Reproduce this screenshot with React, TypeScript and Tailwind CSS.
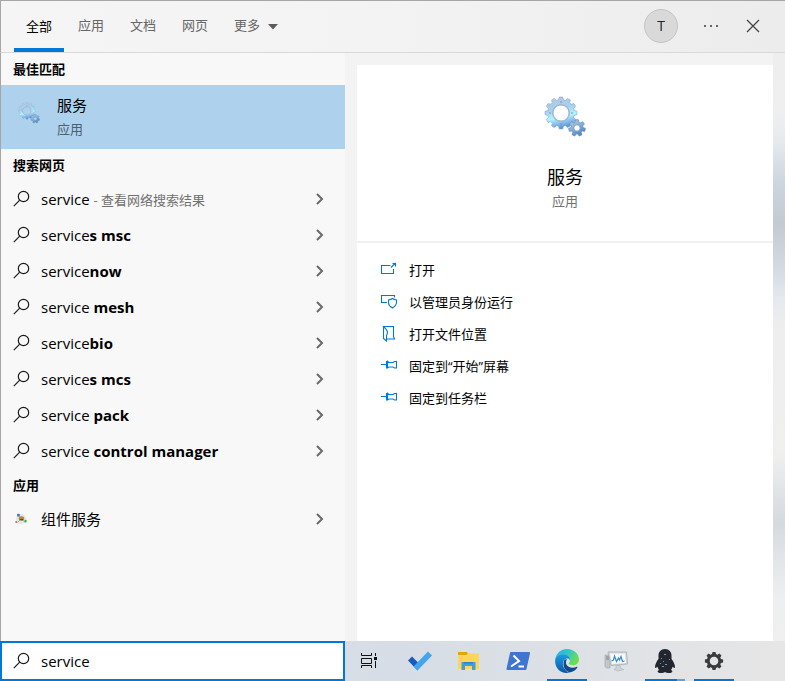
import type { ReactNode } from "react";

const FONT = "font-['Open_Sans','Noto_Sans_CJK_SC',sans-serif]";

function gearPath(cx: number, cy: number, outer: number, inner: number, hole: number, teeth: number) {
  const step = (Math.PI * 2) / teeth;
  const at = (r: number, a: number) =>
    `${(cx + r * Math.cos(a)).toFixed(2)} ${(cy + r * Math.sin(a)).toFixed(2)}`;
  let d = "";
  for (let i = 0; i < teeth; i++) {
    const a = i * step - Math.PI / 2;
    d += `${i ? "L" : "M"}${at(inner, a - step * 0.36)}L${at(outer, a - step * 0.2)}L${at(outer, a + step * 0.2)}L${at(inner, a + step * 0.36)}`;
  }
  return `${d}ZM${cx - hole} ${cy}a${hole} ${hole} 0 1 0 ${hole * 2} 0a${hole} ${hole} 0 1 0 ${-hole * 2} 0Z`;
}

function ServicesIcon({ id, className }: { id: string; className: string }) {
  return (
    <svg viewBox="0 0 42 42" className={className} aria-hidden="true">
      <defs>
        <linearGradient id={id} x1="0.35" y1="0" x2="0.6" y2="1">
          <stop offset="0" stopColor="#b9c8e2" />
          <stop offset="0.35" stopColor="#a3d0f2" />
          <stop offset="0.62" stopColor="#b4f4ff" />
          <stop offset="0.8" stopColor="#86bdf0" />
          <stop offset="1" stopColor="#5088cf" />
        </linearGradient>
        <linearGradient id={`${id}Small`} x1="0" y1="0" x2="0.6" y2="1">
          <stop offset="0" stopColor="#b8c9de" />
          <stop offset="0.5" stopColor="#86b4de" />
          <stop offset="1" stopColor="#4a86c6" />
        </linearGradient>
      </defs>
      <path d={gearPath(17, 17, 16, 13.4, 8, 12)} fill={`url(#${id})`} fillRule="evenodd" stroke="#8aa5c6" strokeWidth="0.6" />
      <circle cx="17" cy="17" r="8.4" fill="none" stroke="#a9b7c9" strokeWidth="1.2" />
      <g fill="#6a93bd">
        <circle cx="17" cy="6" r="0.8" />
        <circle cx="6" cy="17" r="0.8" />
        <circle cx="28" cy="17" r="0.8" />
        <circle cx="17" cy="28" r="0.8" />
      </g>
      <path d={gearPath(33, 32, 8.4, 6, 3.2, 7)} fill={`url(#${id}Small)`} fillRule="evenodd" stroke="#6688ad" strokeWidth="0.7" />
    </svg>
  );
}

function SearchIcon({ className = "" }: { className?: string }) {
  return (
    <svg viewBox="0 0 18 18" className={`h-[18px] w-[18px] shrink-0 ${className}`} fill="none" stroke="#1a1a1a" strokeWidth="1.2" aria-hidden="true">
      <circle cx="10.5" cy="6.500" r="5.2" />
      <path d="M6.700 10.2 0.800 16.2" />
    </svg>
  );
}

function ChevronIcon() {
  return (
    <svg viewBox="0 0 8 12" className="h-3 w-2 shrink-0" fill="none" stroke="#6a6a6a" strokeWidth="2" aria-hidden="true">
      <path d="M1 1l5 5-5 5" />
    </svg>
  );
}

function ComponentServicesIcon() {
  return (
    <svg viewBox="0 0 14 14" className="ml-[2px] h-3 w-3" aria-hidden="true">
      <circle cx="7" cy="7" r="6" fill="#e3e7ec" />
      <path d="M4 3l3 4-4 4M7 7l4 3" stroke="#9aa5af" fill="none" />
      <rect x="2.500" y="1" width="3" height="3" fill="#4c6ea8" />
      <ellipse cx="7.500" cy="6.500" rx="3.200" ry="2.600" fill="#b08b35" />
      <path d="M6 7.800h3.500" stroke="#3d3212" />
      <rect x="0.500" y="9.500" width="2" height="2" fill="#e0524a" />
      <rect x="11" y="8" width="2.500" height="3" fill="#34b54a" />
    </svg>
  );
}

function SectionTitle({ children }: { children: ReactNode }) {
  return <h2 className="flex h-8 items-center pl-3 text-[13px] leading-5 font-bold text-black">{children}</h2>;
}

function ResultRow({ icon, children }: { icon: ReactNode; children: ReactNode }) {
  return (
    <li>
      <button type="button" className="flex h-9 w-full items-center pr-[21px] pl-3 text-left text-[15px] leading-5 text-black">
        <span className="flex w-7 shrink-0 items-center">{icon}</span>
        <span className="min-w-0 flex-1 truncate">{children}</span>
        <ChevronIcon />
      </button>
    </li>
  );
}

const suggestions = [
  ["service", "s msc"],
  ["service", "now"],
  ["service ", "mesh"],
  ["service", "bio"],
  ["service", "s mcs"],
  ["service ", "pack"],
  ["service ", "control manager"],
];

const pin = <path d="M0 6.500h5.500M6.500 2.500v8M6.500 3.500l1.500 1h4l1.500-1h2v6.500h-2l-1.500-1h-4l-1.500 1H5.500v-6.500Z" />;

const actions: { label: string; icon: ReactNode }[] = [
  { label: "打开", icon: <path d="M9.500 3.500h-9v8h12V7M10 5.500l4.500-4.500M11.500 1.500h3V4.500" /> },
  {
    label: "以管理员身份运行",
    icon: <path d="M6 8.500H0.500v-7h13V3.500M11.500 4.500c1 .9 2.300 1.300 4 1.500v2.500c0 2.500-1.500 4-4 5.500-2.500-1.500-4-3-4-5.500V6c1.700-.2 3-.6 4-1.500Z" />,
  },
  { label: "打开文件位置", icon: <path d="M2.500 0.500v12l3 2.500V9.500c1-1.500 1-4.500-.5-6.500L2.500 0.500h10v10l1 2.500h-8" /> },
  { label: "固定到“开始”屏幕", icon: pin },
  { label: "固定到任务栏", icon: pin },
];

const taskbar: { label: string; active?: boolean; split?: boolean; icon: ReactNode }[] = [
  {
    label: "任务视图",
    icon: (
      <svg viewBox="0 0 24 24" className="h-6 w-6" fill="none" stroke="#111" strokeWidth="1" aria-hidden="true">
        <path d="M2.500 4v2.500h10V4M2.500 19v-2.500h10V19M2.500 9.500h10v5h-10zM16.500 4v3M16.500 12v7" />
        <path d="M15 8h3v3h-3z" fill="#111" stroke="none" />
      </svg>
    ),
  },
  {
    label: "待办",
    icon: (
      <svg viewBox="0 0 24 24" className="h-6 w-6" aria-hidden="true">
        <path d="M0 11.500 4 7.500l6.500 6.500-1 7.500Z" fill="#185abd" />
        <path d="M5.500 17.500 20 2.500l4 4L9.500 21.500Z" fill="#42a5ee" />
      </svg>
    ),
  },
  {
    label: "文件资源管理器",
    icon: (
      <svg viewBox="0 0 24 24" className="h-6 w-6" aria-hidden="true">
        <path d="M1 3h9l1 2h10.500v5H1Z" fill="#e5a50a" />
        <path d="M1 6h8.500l1.500-1.500h11V20H1Z" fill="#ffd45b" />
        <path d="M4.500 21v-8h14v8h-3.500v-4h-7v4Z" fill="#3f9de0" />
        <path d="M7 13h9v1.500H7z" fill="#2c83c8" />
      </svg>
    ),
  },
  {
    label: "PowerShell",
    icon: (
      <svg viewBox="0 0 24 24" className="h-6 w-6" aria-hidden="true">
        <path d="M5 3h18a1 1 0 0 1 1 1.200l-3.500 15.800a1 1 0 0 1-1 1H1.500a1 1 0 0 1-1-1.200L4 4a1 1 0 0 1 1-1Z" fill="#3f75d0" />
        <path d="M7.500 6.500 13 12l-8 5.500M12.500 17.500h5.500" fill="none" stroke="#fff" strokeWidth="2" />
      </svg>
    ),
  },
  {
    label: "Edge",
    active: true,
    icon: (
      <svg viewBox="0 0 24 24" className="h-6 w-6" aria-hidden="true">
        <defs>
          <linearGradient id="edgeTop" x1="0" y1="0" x2="1" y2="0.500">
            <stop offset="0" stopColor="#2aa7e8" />
            <stop offset="0.500" stopColor="#30c6c8" />
            <stop offset="1" stopColor="#6be04f" />
          </linearGradient>
          <linearGradient id="edgeBottom" x1="0" y1="0" x2="0" y2="1">
            <stop offset="0" stopColor="#1c9de0" />
            <stop offset="1" stopColor="#0d56a8" />
          </linearGradient>
        </defs>
        <path d="M.2 11C.8 4.500 6 0 12 0c7 0 12 5.200 12 10.500 0 3.500-2.800 5.800-6 5.800-3 0-4.300-1-4.300-1.700 0-.6 1.300-1.300 1.300-3.300C15 8.500 12.300 6.500 9 6.500c-4 0-7 2-8.800 4.500Z" fill="url(#edgeTop)" />
        <path d="M.1 12C.3 8 4 5.500 8.500 5.500c3.800 0 6.400 2.300 6.500 5.500-.8-1.300-2-1.800-3.300-1.500-3 .6-4.700 4-3.400 8 1 3 3.300 5.300 6.200 6C6.500 25.500 0 19.500.1 12Z" fill="url(#edgeBottom)" />
        <path d="M9.500 11c-2 3-1.500 10 5 12.500 3.500-.5 6.500-2.500 8-5.200.2-.5-.2-.8-.7-.5-4 2-9 1-10.500-2.500-.7-1.800-.3-3.500.7-5-.9-.2-1.800 0-2.500.7Z" fill="#114a8b" />
      </svg>
    ),
  },
  {
    label: "性能监视器",
    icon: (
      <svg viewBox="0 0 24 24" className="h-6 w-6" aria-hidden="true">
        <path d="M1 6h5v13H2.500L1 17.500Z" fill="#c3c6c8" stroke="#a0a4a7" strokeWidth="0.600" />
        <path d="M2 8h3M2 10h3" stroke="#7c8285" />
        <path d="M4 3h18.500l1 12L7 16.500Z" fill="#d6d9db" stroke="#a2a7aa" strokeWidth="0.700" />
        <path d="M6 4.500h15l1 9.500L8 15Z" fill="#f6fafd" />
        <path d="M7.500 12l2-1 1-4 2 5.500 2-3.500 1 2 1.500-3.500 1.500 5 2-.5" fill="none" stroke="#3d8bc9" strokeWidth="1.200" />
        <path d="M12 16.500h4l1 3 3 1-6 1.500-4-1.500 2-1Z" fill="#d0d3d5" stroke="#a8acaf" strokeWidth="0.500" />
      </svg>
    ),
  },
  {
    label: "QQ",
    active: true,
    split: true,
    icon: (
      <svg viewBox="0 0 24 24" className="h-6 w-6" aria-hidden="true">
        <path d="M12 0c4.200 0 6.500 3 6.500 6.500V10c1.800 2.200 3.500 5.500 3.500 8 0 1.200-1.200 1.400-2.300-.5-.5 1.500-1 2.500-1.700 3.500 2.500 1 1.500 3-2 3-1.500 0-3-.4-4-1-1 .6-2.500 1-4 1-3.500 0-4.500-2-2-3-.7-1-1.200-2-1.700-3.500C3.200 19.400 2 19.200 2 18c0-2.500 1.700-5.800 3.500-8V6.500C5.500 3 7.800 0 12 0Z" fill="#23252f" />
        <g fill="#6a9db5">
          <path d="M11 5h2v1h-2zM8 9h1v1H8zM16 10h1v1h-1zM10 12h1v1h-1zM7 14h1v1H7zM12 15h2v1h-2zM9 17h2v1H9z" />
        </g>
      </svg>
    ),
  },
  {
    label: "设置",
    active: true,
    icon: (
      <svg viewBox="0 0 24 24" className="h-6 w-6" aria-hidden="true">
        <path d={gearPath(12, 12, 9.200, 7.200, 4.300, 8)} fill="#3b3b3d" fillRule="evenodd" />
      </svg>
    ),
  },
];

export default function App() {
  return (
    <div className={`flex min-h-screen flex-col bg-[#f1f1f1] text-[13px] leading-5 text-black ${FONT}`}>
      <header className="flex h-[53px] items-stretch border-t border-b border-l border-t-[#a6a6a6] border-b-[#d9d9d9] border-l-[#a6a6a6] bg-linear-to-r from-[#f5f5f5] via-[#f3f3f3] to-[#ececec] pr-3 pl-[13px]">
        <nav className="flex gap-[2px]">
          <button type="button" className="w-[50px] border-b-4 border-[#0078d7] pt-[2px] text-black">全部</button>
          {["应用", "文档", "网页"].map((t) => (
            <button key={t} type="button" className="w-[50px] pb-1 text-[#666]">{t}</button>
          ))}
          <button type="button" className="flex items-center gap-2 pb-1 pl-3 text-[#666]">
            更多
            <svg viewBox="0 0 10 6" className="mt-1 h-[6px] w-[10px]" aria-hidden="true">
              <path d="M0 0h10L5 5.500Z" fill="#5c5c5c" />
            </svg>
          </button>
        </nav>
        <div className="ml-auto flex items-center pb-[2px]">
          <button type="button" className="h-[34px] w-[34px] rounded-full border border-[#c4c4c4] bg-[#d9d9d9] text-[14px] text-[#222]">T</button>
          <button type="button" aria-label="选项" className="ml-[25px]">
            <svg viewBox="0 0 16 4" className="h-1 w-4" fill="#666" aria-hidden="true">
              <path d="M1 1h2v2H1zM7 1h2v2H7zM13 1h2v2h-2z" />
            </svg>
          </button>
          <button type="button" aria-label="关闭" className="mr-[13px] ml-[27px]">
            <svg viewBox="0 0 14 14" className="h-[14px] w-[14px]" fill="none" stroke="#444" strokeWidth="1.300" aria-hidden="true">
              <path d="M1 1l12 12M13 1 1 13" />
            </svg>
          </button>
        </div>
      </header>

      <main className="flex flex-1">
        <section className="w-[345px] shrink-0 border-l border-[#a6a6a6] bg-[#f8f8f8]">
          <SectionTitle>最佳匹配</SectionTitle>
          <button type="button" className="flex h-16 w-full items-center bg-[#aed2ee] pl-[17px] text-left">
            <ServicesIcon id="gearSmall" className="mr-[17px] mb-2 h-[22px] w-[22px]" />
            <span className="flex flex-col gap-1">
              <span className="text-[15px] leading-5">服务</span>
              <span className="leading-5 text-[#4f606d]">应用</span>
            </span>
          </button>
          <SectionTitle>搜索网页</SectionTitle>
          <ul>
            <ResultRow icon={<SearchIcon />}>
              service <span className="text-[13px] text-[#707070]">- 查看网络搜索结果</span>
            </ResultRow>
            {suggestions.map(([typed, rest]) => (
              <ResultRow key={typed + rest} icon={<SearchIcon />}>
                {typed}
                <b className="font-bold">{rest}</b>
              </ResultRow>
            ))}
          </ul>
          <SectionTitle>应用</SectionTitle>
          <ul>
            <ResultRow icon={<ComponentServicesIcon />}>组件服务</ResultRow>
          </ul>
        </section>

        <div className="flex flex-1 bg-[linear-gradient(to_bottom,#eeeeee_0%,#efefef_10%,#e6eaef_15%,#cdd5de_22%,#c3cad2_29%,#d2d9e1_36%,#e6e9ef_42%,#eeeeee_47%,#f0f0ef_68%,#dde1e5_76%,#d5dade_80%,#e2e5e9_86%,#eeeff0_93%,#f0f0f0_100%)]">
          <div className="flex flex-1 bg-[#f3f3f3] pt-3 pl-3">
            <section className="flex-1 bg-white">
              <div className="flex h-[178px] flex-col items-center border-b-2 border-[#f0f0f0] pt-[31px]">
                <ServicesIcon id="gearLarge" className="h-[42px] w-[42px]" />
                <h1 className="mt-[25px] text-[18px] leading-7">服务</h1>
                <p className="text-[#707070]">应用</p>
              </div>
              <ul className="pt-[11px]">
                {actions.map(({ label, icon }) => (
                  <li key={label}>
                    <button type="button" className="flex h-8 w-full items-center gap-3 pl-6 text-left">
                      <svg viewBox="0 0 16 16" className="h-4 w-4" fill="none" stroke="#0078d7" strokeWidth="1.100" aria-hidden="true">
                        {icon}
                      </svg>
                      {label}
                    </button>
                  </li>
                ))}
              </ul>
            </section>
          </div>
          <div className="w-3" />
        </div>
      </main>

      <footer className="flex h-10 bg-linear-to-r from-[#dfe5e6] via-[#d6dde6] to-[#e6e6e6]">
        <label className="flex w-[345px] shrink-0 items-center border-2 border-[#0078d7] bg-white pl-[11px]">
          <SearchIcon className="mr-[10px]" />
          <input type="text" aria-label="搜索" defaultValue="service" className="min-w-0 flex-1 bg-transparent text-[15px] leading-5 outline-none" />
        </label>
        <nav className="flex pl-px">
          {taskbar.map(({ label, active, split, icon }) => (
            <button key={label} type="button" aria-label={label} className="flex w-[49px] flex-col items-center">
              <span className="flex flex-1 items-center">{icon}</span>
              <span className={`-mt-[2px] flex h-[2px] w-10 justify-end ${active ? "bg-[#0078d7]" : ""}`}>
                {split && <span className="w-2 bg-[#5fa5dc]" />}
              </span>
            </button>
          ))}
        </nav>
      </footer>
    </div>
  );
}
